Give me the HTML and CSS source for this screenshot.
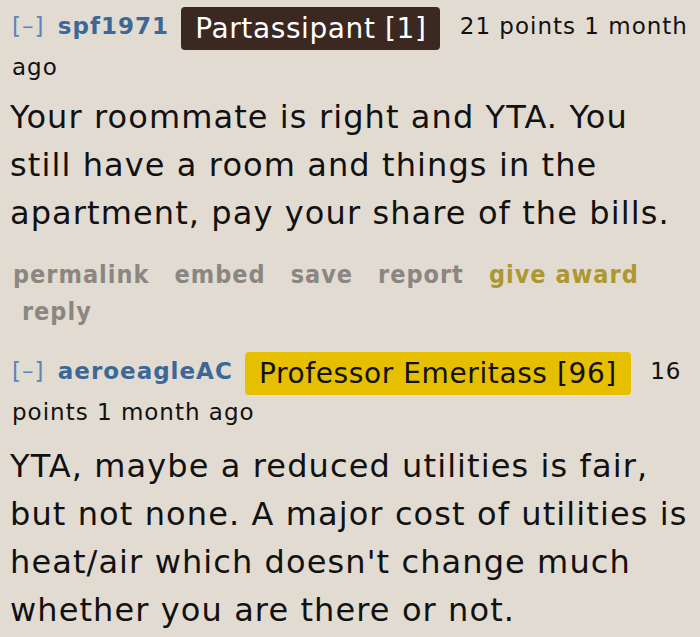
FILE: index.html
```html
<!DOCTYPE html>
<html>
<head>
<meta charset="utf-8">
<link rel="stylesheet" href="styles.css">
</head>
<body>
<div class="thread">
  <div class="comment">
    <p class="tagline"><span class="expand">[–]</span> <a class="author">spf1971</a> <span class="flair flair-dark">Partassipant [1]</span> <span class="score">21 points</span> <time>1 month ago</time></p>
    <div class="md">
      <p>Your roommate is right and YTA. You still have a room and things in the apartment, pay your share of the bills.</p>
    </div>
    <ul class="buttons">
      <li>permalink</li>
      <li>embed</li>
      <li>save</li>
      <li>report</li>
      <li class="award">give award</li>
      <li>reply</li>
    </ul>
  </div>
  <div class="comment">
    <p class="tagline"><span class="expand">[–]</span> <a class="author">aeroeagleAC</a> <span class="flair flair-gold">Professor Emeritass [96]</span> <span class="score">16 points</span> <time>1 month ago</time></p>
    <div class="md">
      <p>YTA, maybe a reduced utilities is fair, but not none. A major cost of utilities is heat/air which doesn't change much whether you are there or not.</p>
    </div>
  </div>
</div>
</body>
</html>
```

FILE: styles.css
```css
html, body {
  margin: 0;
  padding: 0;
  background: #e2dbd1;
}
body {
  font-family: "DejaVu Sans", Verdana, sans-serif;
  color: #111;
  overflow: hidden;
}
.thread {
  padding: 7px 0 0 10px;
}
.tagline {
  margin: 0;
  padding-left: 2px;
  font-size: 23px;
  letter-spacing: 1px;
  line-height: 38px;
}
.expand {
  color: #5a86b8;
  margin-right: 5px;
}
.author {
  color: #3c6898;
  font-weight: bold;
  margin-right: 4px;
}
.flair {
  font-size: 28px;
  letter-spacing: 0.6px;
  padding: 5px 14px;
  border-radius: 4px;
  margin-right: 11px;
  vertical-align: -4px;
}
.flair-dark {
  background: #3b2820;
  color: #fff;
}
.flair-gold {
  background: #e5bf00;
  color: #111;
}
.md p {
  margin: 7px 0 0;
  font-size: 32px;
  letter-spacing: 1.1px;
  line-height: 48px;
}
.comment + .comment .md p {
  margin-top: 11px;
}
.buttons {
  list-style: none;
  margin: 19px 0 0;
  padding: 0 0 0 3px;
  display: flex;
  flex-wrap: wrap;
  font-family: "DejaVu Sans Condensed", "DejaVu Sans", sans-serif;
  font-stretch: condensed;
  font-weight: bold;
  font-size: 25px;
  letter-spacing: 1px;
  line-height: 37px;
  color: #8a8783;
}
.buttons li {
  padding: 0 16px 0 9px;
}
.buttons li:first-child {
  padding-left: 0;
}
.buttons .award {
  color: #ad9830;
}
.comment + .comment {
  margin-top: 22px;
}
```
